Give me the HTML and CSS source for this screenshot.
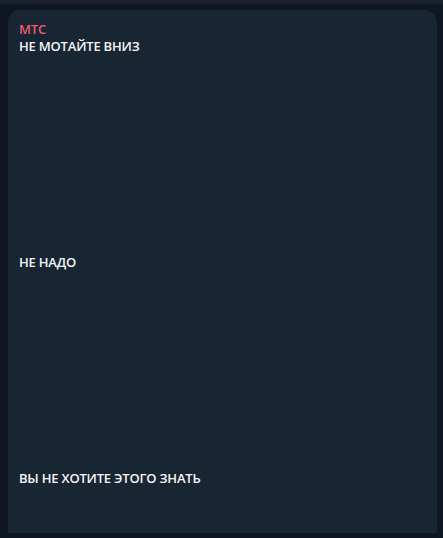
FILE: index.html
```html
<!DOCTYPE html>
<html lang="ru">
<head>
<meta charset="utf-8">
<link rel="stylesheet" href="styles.css">
</head>
<body>
<div class="topbar"></div>
<div class="chat">
  <div class="bubble">
    <div class="author">МТС</div>
    <div class="message">НЕ МОТАЙТЕ ВНИЗ<br><br><br><br><br><br><br><br><br><br><br><br>НЕ НАДО<br><br><br><br><br><br><br><br><br><br><br><br>ВЫ НЕ ХОТИТЕ ЭТОГО ЗНАТЬ</div>
  </div>
</div>
</body>
</html>
```

FILE: styles.css
```css
html, body {
  margin: 0;
  padding: 0;
  height: 100%;
}
body {
  background: #0e1621;
  font-family: "Open Sans", "Noto Sans", sans-serif;
  overflow: hidden;
}
.topbar {
  height: 4px;
  background: #17212b;
}
.chat {
  padding: 6px 6px 5px 8px;
}
.bubble {
  background: #182533;
  border-radius: 12px 12px 0 0;
  height: 523px;
  padding: 10px 12px 0 11px;
  box-sizing: border-box;
}
.author {
  color: #ec5c6c;
  font-weight: 600;
  font-size: 13px;
  line-height: 18px;
  letter-spacing: -0.2px;
}
.message {
  color: #f5f5f5;
  font-weight: 600;
  font-size: 13px;
  line-height: 18px;
  letter-spacing: -0.2px;
  margin-top: -1px;
}
```
